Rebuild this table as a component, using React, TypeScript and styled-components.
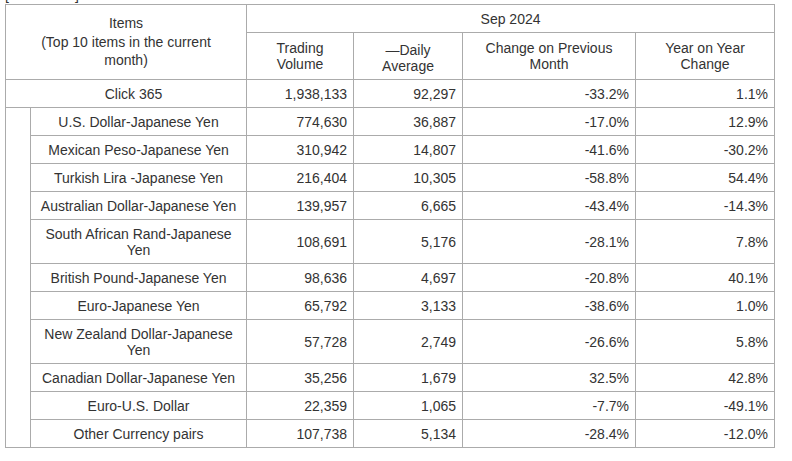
import React from "react";
import styled, { createGlobalStyle } from "styled-components";

const GlobalStyle = createGlobalStyle`
  html, body {
    margin: 0;
    padding: 0;
    background: #ffffff;
  }
  body {
    font-family: "Liberation Sans", Arial, sans-serif;
    color: #333333;
  }
`;

const Page = styled.div`
  padding: 0 0 0 5px;
  overflow: hidden;
`;

const Caption = styled.div`
  font-size: 14px;
  line-height: 16px;
  height: 16px;
  margin-top: -13px;
  margin-bottom: 1px;
  color: #333333;
  white-space: nowrap;
`;

const Table = styled.table`
  border-collapse: collapse;
  table-layout: fixed;
  width: 769px;
  font-family: "Liberation Sans", Arial, sans-serif;
  font-size: 14px;
  line-height: 16px;
  color: #333333;
`;

const Head = styled.th<{ $tall?: boolean }>`
  border: 1px solid #ababab;
  font-weight: normal;
  text-align: center;
  vertical-align: middle;
  padding: ${(p) => (p.$tall ? "5px 22px" : "5.5px 6px")};
  line-height: ${(p) => (p.$tall ? "18.5px" : "16px")};
`;

const HeadLine = styled.span<{ $drop?: boolean }>`
  display: block;
  padding-top: ${(p) => (p.$drop ? "3px" : "0")};
`;

const Cell = styled.td<{ $align?: "left" | "center" | "right"; $shift?: number }>`
  border: 1px solid #ababab;
  padding: 5.5px 6px 5.5px ${(p) => 6 + (p.$shift ?? 0)}px;
  text-align: ${(p) => p.$align ?? "right"};
  vertical-align: middle;
`;

const IndentCell = styled.td`
  border: 1px solid #ababab;
  padding: 0;
`;

type Row = {
  name: React.ReactNode;
  volume: string;
  daily: string;
  mom: string;
  yoy: string;
};

const rows: Row[] = [
  { name: "U.S. Dollar-Japanese Yen", volume: "774,630", daily: "36,887", mom: "-17.0%", yoy: "12.9%" },
  { name: "Mexican Peso-Japanese Yen", volume: "310,942", daily: "14,807", mom: "-41.6%", yoy: "-30.2%" },
  { name: "Turkish Lira -Japanese Yen", volume: "216,404", daily: "10,305", mom: "-58.8%", yoy: "54.4%" },
  { name: "Australian Dollar-Japanese Yen", volume: "139,957", daily: "6,665", mom: "-43.4%", yoy: "-14.3%" },
  { name: "South African Rand-Japanese Yen", volume: "108,691", daily: "5,176", mom: "-28.1%", yoy: "7.8%" },
  { name: "British Pound-Japanese Yen", volume: "98,636", daily: "4,697", mom: "-20.8%", yoy: "40.1%" },
  { name: "Euro-Japanese Yen", volume: "65,792", daily: "3,133", mom: "-38.6%", yoy: "1.0%" },
  { name: "New Zealand Dollar-Japanese Yen", volume: "57,728", daily: "2,749", mom: "-26.6%", yoy: "5.8%" },
  { name: "Canadian Dollar-Japanese Yen", volume: "35,256", daily: "1,679", mom: "32.5%", yoy: "42.8%" },
  { name: "Euro-U.S. Dollar", volume: "22,359", daily: "1,065", mom: "-7.7%", yoy: "-49.1%" },
  { name: "Other Currency pairs", volume: "107,738", daily: "5,134", mom: "-28.4%", yoy: "-12.0%" },
];

export default function App() {
  return (
    <Page>
      <GlobalStyle />
      <Caption>[Units: Lots]</Caption>
      <Table>
        <colgroup>
          <col style={{ width: 25 }} />
          <col style={{ width: 216 }} />
          <col style={{ width: 107 }} />
          <col style={{ width: 109 }} />
          <col style={{ width: 173 }} />
          <col style={{ width: 139 }} />
        </colgroup>
        <thead>
          <tr>
            <Head $tall colSpan={2} rowSpan={2}>
              Items
              <br />
              (Top 10 items in the current month)
            </Head>
            <Head colSpan={4}>Sep 2024</Head>
          </tr>
          <tr>
            <Head>
              Trading
              <br />
              Volume
            </Head>
            <Head>
              <HeadLine $drop>—Daily</HeadLine>
              <HeadLine>Average</HeadLine>
            </Head>
            <Head>
              Change on Previous
              <br />
              Month
            </Head>
            <Head>
              Year on Year
              <br />
              Change
            </Head>
          </tr>
        </thead>
        <tbody>
          <tr>
            <Cell $align="center" $shift={15} colSpan={2}>
              Click 365
            </Cell>
            <Cell>1,938,133</Cell>
            <Cell>92,297</Cell>
            <Cell>-33.2%</Cell>
            <Cell>1.1%</Cell>
          </tr>
          {rows.map((r, i) => (
            <tr key={i}>
              {i === 0 && <IndentCell rowSpan={rows.length} />}
              <Cell $align="center">{r.name}</Cell>
              <Cell>{r.volume}</Cell>
              <Cell>{r.daily}</Cell>
              <Cell>{r.mom}</Cell>
              <Cell>{r.yoy}</Cell>
            </tr>
          ))}
        </tbody>
      </Table>
    </Page>
  );
}
